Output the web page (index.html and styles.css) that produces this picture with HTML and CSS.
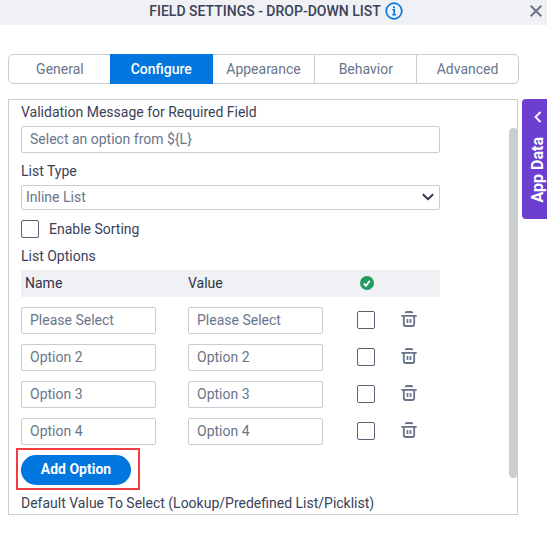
FILE: index.html
```html
<!DOCTYPE html>
<html lang="en">
<head>
<meta charset="utf-8">
<meta name="viewport" content="width=device-width, initial-scale=1">
<title>Field Settings - Drop-down List</title>
<link rel="stylesheet" href="styles.css">
</head>
<body>
<svg class="symbols" aria-hidden="true">
  <symbol id="trash" viewBox="0 0 16 16">
    <path d="M4.500 2.200Q4.700 1 6 1H10Q11.300 1 11.500 2.200M.3 4.800H15.700M2.800 4.800V13Q2.800 15 4.800 15H11.200Q13.200 15 13.200 13V4.800" fill="none" stroke="currentColor" stroke-width="1.800"/>
    <path d="M6.500 8V12M9.500 8V12" stroke="currentColor" stroke-width="1.700"/>
  </symbol>
</svg>
<header class="header">
  <h1 class="title">FIELD SETTINGS - DROP-DOWN LIST</h1>
  <button class="icon-button info" aria-label="Information">
    <svg width="18" height="18" viewBox="0 0 18 18"><circle cx="9" cy="9" r="7.800" fill="none" stroke="currentColor" stroke-width="1.700"/><path d="M7.500 7.800H9.200V12.500M7.300 12.700H11" fill="none" stroke="currentColor" stroke-width="1.600"/><circle cx="9" cy="5.300" r="1.100" fill="currentColor"/></svg>
  </button>
  <button class="icon-button close" aria-label="Close">
    <svg width="12" height="12" viewBox="0 0 12 12"><path d="M.7.700 11.300 11.300M11.300.700.700 11.300" stroke="currentColor" stroke-width="2"/></svg>
  </button>
</header>
<nav class="tabs" aria-label="Settings sections">
  <button class="tab">General</button>
  <button class="tab active">Configure</button>
  <button class="tab">Appearance</button>
  <button class="tab">Behavior</button>
  <button class="tab">Advanced</button>
</nav>
<main class="main">
  <section class="panel">
    <label class="label" for="message">Validation Message for Required Field</label>
    <input class="field" id="message" type="text" value="Select an option from ${L}">
    <label class="label spaced" for="type">List Type</label>
    <div class="select-wrap">
      <select class="field select" id="type"><option>Inline List</option></select>
      <svg class="chevron" width="12" height="8" viewBox="0 0 12 8" aria-hidden="true"><path d="M.8 1.200 6 6.200 11.200 1.200" fill="none" stroke="currentColor" stroke-width="2"/></svg>
    </div>
    <div class="sorting">
      <input class="check" id="sorting" type="checkbox">
      <label for="sorting">Enable Sorting</label>
    </div>
    <div class="label spaced" id="options-label">List Options</div>
    <table class="options" aria-labelledby="options-label">
      <colgroup><col class="col-text"><col class="col-text"><col class="col-check"><col></colgroup>
      <thead>
        <tr>
          <th class="name-head">Name</th>
          <th>Value</th>
          <th class="default-head"><svg class="default-icon" viewBox="0 0 14 14" role="img" aria-label="Default"><circle cx="7" cy="7" r="7" fill="#219c60"/><path d="M3.800 7.500 6 9.700 9.800 4.700" fill="none" stroke="#fff" stroke-width="1.900"/></svg></th>
          <th></th>
        </tr>
      </thead>
      <tbody>
        <tr>
          <td><input class="field short" type="text" aria-label="Name 1" value="Please Select"></td>
          <td><input class="field short" type="text" aria-label="Value 1" value="Please Select"></td>
          <td class="control-cell"><input class="check" type="checkbox" aria-label="Default 1"></td>
          <td class="control-cell"><button class="icon-button trash" aria-label="Delete 1"><svg width="16" height="16"><use href="#trash"/></svg></button></td>
        </tr>
        <tr>
          <td><input class="field short" type="text" aria-label="Name 2" value="Option 2"></td>
          <td><input class="field short" type="text" aria-label="Value 2" value="Option 2"></td>
          <td class="control-cell"><input class="check" type="checkbox" aria-label="Default 2"></td>
          <td class="control-cell"><button class="icon-button trash" aria-label="Delete 2"><svg width="16" height="16"><use href="#trash"/></svg></button></td>
        </tr>
        <tr>
          <td><input class="field short" type="text" aria-label="Name 3" value="Option 3"></td>
          <td><input class="field short" type="text" aria-label="Value 3" value="Option 3"></td>
          <td class="control-cell"><input class="check" type="checkbox" aria-label="Default 3"></td>
          <td class="control-cell"><button class="icon-button trash" aria-label="Delete 3"><svg width="16" height="16"><use href="#trash"/></svg></button></td>
        </tr>
        <tr>
          <td><input class="field short" type="text" aria-label="Name 4" value="Option 4"></td>
          <td><input class="field short" type="text" aria-label="Value 4" value="Option 4"></td>
          <td class="control-cell"><input class="check" type="checkbox" aria-label="Default 4"></td>
          <td class="control-cell"><button class="icon-button trash" aria-label="Delete 4"><svg width="16" height="16"><use href="#trash"/></svg></button></td>
        </tr>
      </tbody>
    </table>
    <div class="add-wrap">
      <button class="add">Add Option</button>
    </div>
    <div class="label last">Default Value To Select (Lookup/Predefined List/Picklist)</div>
    <div class="thumb"></div>
  </section>
  <button class="app-data">
    <svg class="app-arrow" width="8" height="12" viewBox="0 0 8 12" aria-hidden="true"><path d="M6.500 1 1.500 6 6.500 11" fill="none" stroke="currentColor" stroke-width="1.800"/></svg>
    <span class="app-text">App Data</span>
  </button>
</main>
</body>
</html>
```
FILE: styles.css
```css
* {
  box-sizing: border-box;
}

body {
  margin: 0;
  background: #fff;
  color: #3b4259;
  font: 14px/20px Roboto, sans-serif;
}

button,
input,
select {
  margin: 0;
  font: inherit;
}

.symbols {
  display: none;
}

.header {
  position: relative;
  display: flex;
  align-items: center;
  justify-content: center;
  gap: 4px;
  height: 25px;
  padding: 0 0 3px 5px;
  background: #f0f1f4;
}

.title {
  margin: 0;
  font-size: 14px;
  font-weight: 500;
}

.icon-button {
  display: block;
  padding: 0;
  border: 0;
  background: none;
}

.icon-button svg {
  display: block;
}

.info {
  color: #0076de;
}

.close {
  position: absolute;
  top: 5px;
  right: 5px;
  color: #6b7385;
}

.tabs {
  display: grid;
  grid-template-columns: repeat(5, 1fr);
  margin: 29px 28px 15px 8px;
  border: 1px solid #c8ccd5;
  border-radius: 5px;
}

.tab {
  height: 28px;
  padding: 0 0 1px;
  border: 0;
  background: none;
  color: #69758a;
}

.tab + .tab {
  border-left: 1px solid #c8ccd5;
}

.tabs .active {
  height: 30px;
  margin: -1px 0 -1px -1px;
  border: 0;
  background: #0076de;
  color: #fff;
  font-weight: 500;
}

.tabs .active + .tab {
  border-left: 0;
}

.main {
  display: flex;
  align-items: flex-start;
  gap: 4px;
  padding-left: 8px;
}

.panel {
  position: relative;
  flex: 1;
  padding: 2px 77px 1px 12px;
  border: 1px solid #c8ccd5;
}

.label {
  display: block;
  margin-bottom: 4px;
}

.last {
  margin-bottom: 0;
}

.spaced {
  margin-top: 8px;
}

.field {
  display: block;
  width: 100%;
  height: 27px;
  padding: 0 8px 2px;
  border: 1px solid #c8ccd5;
  border-radius: 2px;
  background: #fff;
  color: #69758a;
}

.select-wrap {
  position: relative;
}

.select {
  height: 25px;
  padding: 0 4px 1px;
  appearance: none;
}

.chevron {
  position: absolute;
  top: 8px;
  right: 6px;
  color: #2f3850;
  pointer-events: none;
}

.sorting {
  display: flex;
  align-items: center;
  gap: 10px;
  height: 18px;
  margin-top: 10px;
}

.check {
  display: block;
  width: 18px;
  height: 18px;
  border: 1px solid #5b6278;
  border-radius: 2px;
  background: #fff;
  appearance: none;
}

.options {
  width: 100%;
  border-collapse: collapse;
  table-layout: fixed;
}

.col-text {
  width: 167px;
}

.col-check {
  width: 44px;
}

th {
  height: 27px;
  padding: 0 0 1px;
  background: #f0f1f4;
  font-weight: 400;
  text-align: left;
  color: #2f3547;
}

.name-head {
  padding-left: 4px;
}

.default-head {
  padding-left: 5px;
}

td {
  padding: 10px 0 0;
  vertical-align: top;
}

.short {
  width: 135px;
}

.control-cell {
  padding: 14px 0 0 2px;
}

.default-icon {
  display: block;
  width: 14px;
  height: 14px;
}

.trash {
  color: #66738b;
}

.add-wrap {
  width: 124px;
  margin: 3px 0 3px -5px;
  padding: 5px 7px 3px 3px;
  border: 2px solid #f23b41;
}

.add {
  display: block;
  width: 110px;
  height: 30px;
  padding: 0 0 2px;
  border: 0;
  border-radius: 15px;
  background: #0076de;
  color: #fff;
  font-weight: 700;
}

.thumb {
  position: absolute;
  top: 28px;
  right: -1px;
  bottom: 36px;
  width: 9px;
  border-radius: 5px;
  background: #c9ced1;
}

.app-data {
  display: flex;
  flex-direction: column;
  align-items: flex-end;
  gap: 14px;
  width: 25px;
  height: 120px;
  padding: 12px 1px 0 0;
  border: 0;
  border-radius: 4px 0 0 4px;
  background: #6c3fd1;
  color: #fff;
  font-size: 16px;
  font-weight: 700;
}

.app-arrow {
  margin-right: 4px;
}

.app-text {
  line-height: 16px;
  writing-mode: vertical-rl;
  transform: rotate(180deg);
  white-space: nowrap;
}
```
